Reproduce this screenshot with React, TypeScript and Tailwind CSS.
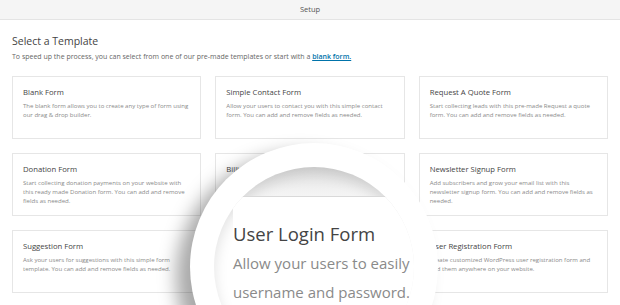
const templates = [
  {
    title: 'Blank Form',
    lines: ['The blank form allows you to create any type of form using', 'our drag & drop builder.'],
  },
  {
    title: 'Simple Contact Form',
    lines: ['Allow your users to contact you with this simple contact', 'form. You can add and remove fields as needed.'],
  },
  {
    title: 'Request A Quote Form',
    lines: ['Start collecting leads with this pre-made Request a quote', 'form. You can add and remove fields as needed.'],
  },
  {
    title: 'Donation Form',
    lines: [
      'Start collecting donation payments on your website with',
      'this ready made Donation form. You can add and remove',
      'fields as needed.',
    ],
  },
  {
    title: 'Billing / Order Form',
    lines: [
      'Collect payments for product and service orders with this',
      'ready-made form template. You can add and remove fields',
      'as needed.',
    ],
  },
  {
    title: 'Newsletter Signup Form',
    lines: [
      'Add subscribers and grow your email list with this',
      'newsletter signup form. You can add and remove fields as',
      'needed.',
    ],
  },
  {
    title: 'Suggestion Form',
    lines: ['Ask your users for suggestions with this simple form', 'template. You can add and remove fields as needed.'],
  },
  {
    title: 'User Login Form',
    lines: ['Allow your users to easily log into your site with their', 'username and password.'],
  },
  {
    title: 'User Registration Form',
    lines: ['Create customized WordPress user registration form and', 'add them anywhere on your website.'],
  },
];

const TemplateCard = ({ title, lines }: { title: string; lines: string[] }) => (
  <div className="h-[63px] border border-[#e6e6e6] bg-white px-[10px] pt-[10px]">
    <div className="text-[7.7px] leading-[11px] text-[#444]">{title}</div>
    <p className="mt-[4px] text-[6.05px] leading-[9px] text-[#8a8a8a]">
      {lines.map((line) => (
        <span key={line} className="block whitespace-nowrap">
          {line}
        </span>
      ))}
    </p>
  </div>
);

// magnifier over the "User Login Form" card
const Lens = () => (
  <div className="absolute left-[190px] top-[143px] h-[248px] w-[248px] rounded-full bg-white shadow-[-14px_10px_18px_rgba(0,0,0,0.34)]">
    <div className="absolute inset-[24px] overflow-hidden rounded-full bg-[linear-gradient(180deg,#e0e0e0_0%,#f2f2f2_12%,#ffffff_26%)] shadow-[inset_0_6px_14px_rgba(0,0,0,0.12)]">
      <div className="absolute left-0 right-0 top-[29px] h-[1.5px] bg-[#d9d9d9]" />
      <div className="absolute left-[19px] top-[30px] h-[200px] w-[300px] bg-white" />
      <div className="absolute left-[19px] top-[54px] whitespace-nowrap">
        <div className="text-[18.5px] leading-[26px] text-[#444]">User Login Form</div>
        <div className="mt-[2px] text-[15px] leading-[29px] text-[#8a8a8a]">
          <span className="block">Allow your users to easily log into your site with their</span>
          <span className="block">username and password.</span>
        </div>
      </div>
    </div>
  </div>
);

const App = () => {
  return (
    <div className="relative h-[305px] w-[620px] overflow-hidden bg-white font-['Open_Sans',sans-serif]">
      <div className="flex h-[20px] items-center justify-center border-b border-[#e4e4e4] bg-[#f5f5f5] text-[7.5px] text-[#555]">
        Setup
      </div>
      <div className="px-[12px]">
        <h1 className="mt-[12px] text-[10.5px] leading-[18px] text-[#444]">Select a Template</h1>
        <p className="mt-[1px] whitespace-nowrap text-[7px] leading-[12px] text-[#666]">
          To speed up the process, you can select from one of our pre-made templates or start with a{' '}
          <a className="font-semibold text-[#0073aa] underline">blank form.</a>
        </p>
        <div className="mt-[13px] grid grid-cols-3 gap-[14px]">
          {templates.map((t) => (
            <TemplateCard key={t.title} title={t.title} lines={t.lines} />
          ))}
        </div>
      </div>
      <Lens />
    </div>
  );
};

export default App;
